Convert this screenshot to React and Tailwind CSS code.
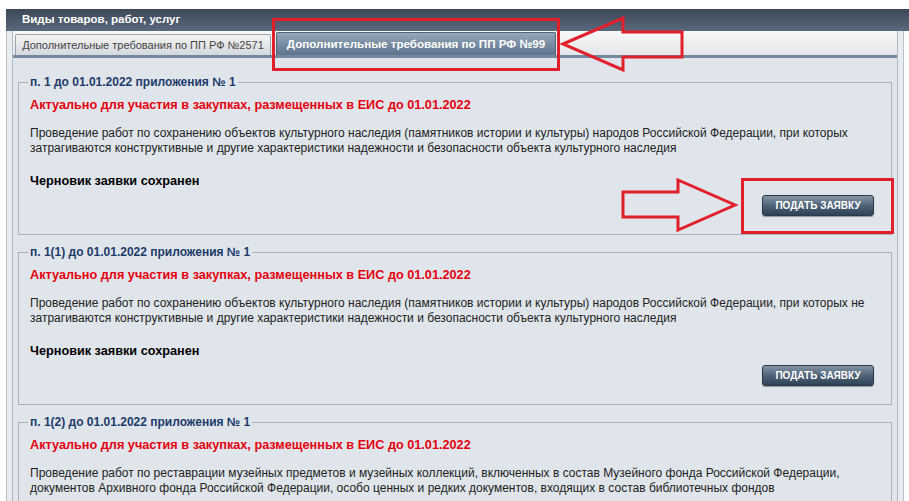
import React from 'react';

// Blocks of the "Виды товаров, работ, услуг" panel.
const items = [
  {
    legend: 'п. 1 до 01.01.2022 приложения № 1',
    lines: [
      'Проведение работ по сохранению объектов культурного наследия (памятников истории и культуры) народов Российской Федерации, при которых',
      'затрагиваются конструктивные и другие характеристики надежности и безопасности объекта культурного наследия',
    ],
  },
  {
    legend: 'п. 1(1) до 01.01.2022 приложения № 1',
    lines: [
      'Проведение работ по сохранению объектов культурного наследия (памятников истории и культуры) народов Российской Федерации, при которых не',
      'затрагиваются конструктивные и другие характеристики надежности и безопасности объекта культурного наследия',
    ],
  },
  {
    legend: 'п. 1(2) до 01.01.2022 приложения № 1',
    lines: [
      'Проведение работ по реставрации музейных предметов и музейных коллекций, включенных в состав Музейного фонда Российской Федерации,',
      'документов Архивного фонда Российской Федерации, особо ценных и редких документов, входящих в состав библиотечных фондов',
    ],
  },
];

function Block({ item }) {
  return (
    <fieldset className="border border-[#aab3bd] pl-[11px] pr-[17px] pb-[18px]">
      <legend className="-ml-[2px] px-[2px] text-[12px] leading-[14px] font-bold text-[#1d3b6a]">
        {item.legend}
      </legend>
      <div className="mt-[8px] text-[12.7px] leading-[16px] font-bold text-[#e4000f]">
        Актуально для участия в закупках, размещенных в ЕИС до 01.01.2022
      </div>
      <p className="mt-[13px] text-[12px] leading-[15px] text-[#222]">
        {item.lines[0]}
        <br />
        {item.lines[1]}
      </p>
      <div className="mt-[17px] text-[12.7px] leading-[16px] font-bold text-black">Черновик заявки сохранен</div>
      <div className="mt-[6px] flex justify-end">
        <button className="h-[21px] w-[112px] rounded-[3px] border border-[#2a3a4b] bg-linear-to-b from-[#8596a7] via-[#4f6277] to-[#2f4256] text-[10px] font-bold text-white shadow-[0_1px_1px_rgba(0,0,0,0.35)]">
          ПОДАТЬ ЗАЯВКУ
        </button>
      </div>
    </fieldset>
  );
}

export default function App() {
  return (
    <div className="relative h-[501px] w-[909px] overflow-hidden bg-white pl-[6px] pt-[9px] font-['Liberation_Sans',Arial,sans-serif]">
      {/* Header bar */}
      <div className="flex h-[22px] items-center bg-linear-to-b from-[#3d4757] to-[#5a697c] pl-[16px] text-[11.5px] font-bold text-white">
        Виды товаров, работ, услуг
      </div>

      <div className="mr-[5px] border-l border-r border-[#b9c1c9] bg-[#e8ecef] px-[5px]">
        <div className="border-l border-r border-[#b3bcc5] bg-[#dfe5ea]">
          {/* Tabs */}
          <div className="flex h-[27px] items-end gap-[5px] border-b-[3px] border-[#7389a0] bg-linear-to-b from-[#f8f8f8] to-[#e3e6e9] pl-[2px]">
            <div className="flex h-[21px] w-[256px] shrink-0 items-center justify-center whitespace-nowrap rounded-t-[2px] border border-b-0 border-[#9ba4ae] bg-linear-to-b from-[#f4f4f4] to-[#d5d9dd] text-[11px] text-[#444]">
              Дополнительные требования по ПП РФ №2571
            </div>
            <div className="flex h-[23px] w-[280px] shrink-0 items-center justify-center whitespace-nowrap rounded-t-[2px] border border-b-0 border-[#4f637a] bg-linear-to-b from-[#95a7b9] to-[#5d748d] text-[11.6px] font-bold text-white">
              Дополнительные требования по ПП РФ №99
            </div>
          </div>

          {/* Content */}
          <div className="flex flex-col gap-[10px] px-[5px] pt-[17px] pb-[20px]">
            {items.map((item) => (
              <Block key={item.legend} item={item} />
            ))}
          </div>
        </div>
      </div>

      {/* Red annotation marks drawn over the screenshot */}
      <svg className="pointer-events-none absolute left-0 top-0" width="909" height="501" viewBox="0 0 909 501">
        <g fill="none" stroke="#e2202b" strokeWidth="3" strokeLinejoin="miter">
          <rect x="273.5" y="19.5" width="285" height="50" />
          <polygon points="563,44 623,18 623,32 682,32 682,57 623,57 623,70" />
          <rect x="742.5" y="179.5" width="150" height="53" />
          <polygon points="623,192 678,192 678,180 735,205 678,230 678,217 623,217" />
        </g>
      </svg>
    </div>
  );
}
